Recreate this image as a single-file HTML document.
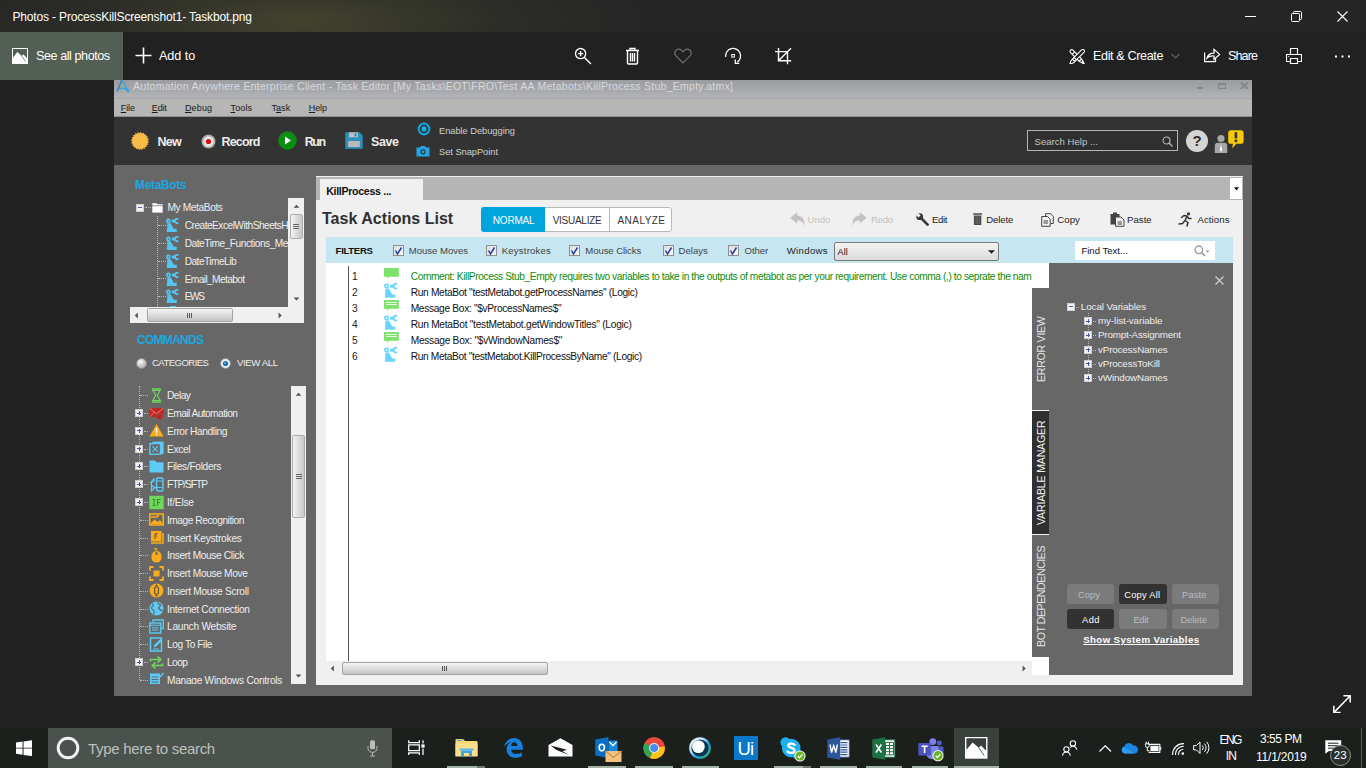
<!DOCTYPE html>
<html><head><meta charset="utf-8"><title>Photos</title>
<style>
*{box-sizing:border-box;margin:0;padding:0}
html,body{width:1366px;height:768px;overflow:hidden;background:#222;font-family:"Liberation Sans",sans-serif;}
.a{position:absolute}
.t{position:absolute;white-space:nowrap;line-height:20px}
#root{position:absolute;left:0;top:0;width:1366px;height:768px;overflow:hidden;background:#222}
#ptitle{left:0;top:0;width:1366px;height:32px;background:radial-gradient(ellipse 340px 80px at 300px 22px,#42432c 0%,#37382b 30%,#2c2c28 62%,#262626 100%)}
#ptool{left:0;top:32px;width:1366px;height:48px;background:#212121}
#seeall{left:0;top:32px;width:123px;height:48px;background:#535e54}
.pw{color:#fff}
#tb{left:0;top:728px;width:1366px;height:40px;background:#1c201d}
#tsearch{left:48px;top:728px;width:344px;height:40px;background:#4b514d}
#aa{left:114px;top:80px;width:1138px;height:616px;background:#676767}
#aatitle{left:114px;top:80px;width:1138px;height:18px;background:linear-gradient(#9c9da1,#a4a5a9 45%,#b4b5ba)}
#aamenu{left:114px;top:98px;width:1138px;height:19px;background:#b6b6b6;border-top:1px solid #a6a6a8;border-bottom:1px solid #8e8e8e}
#aabar{left:114px;top:117px;width:1138px;height:48px;background:#333}
.m{color:#1a1a1a}
.m u{text-decoration-thickness:1px;text-underline-offset:1px}
.bb{color:#ececec;font-weight:bold}
.tr{color:#eee}
.sm{color:#d0d0d0}
.dk{color:#222}
.ex{position:absolute;width:8px;height:8px;background:#f2f2f2;border:1px solid #cfcfcf}
.ex:before{content:"";position:absolute;left:1px;top:2.5px;width:4px;height:1px;background:#4556b4}
.ex.p:after{content:"";position:absolute;left:2.5px;top:1px;width:1px;height:4px;background:#4556b4}
.dh{position:absolute;height:0;border-top:1px dotted #b8b8b8}
.dv{position:absolute;width:0;border-left:1px dotted #b8b8b8}
.sb{position:absolute;background:#f0f0f0}
.thv{position:absolute;background:linear-gradient(90deg,#f4f4f4,#dcdcdc 50%,#c8c8c8);border:1px solid #acacac;border-radius:2px}
.thh{position:absolute;background:linear-gradient(#f4f4f4,#dcdcdc 50%,#c4c4c4);border:1px solid #a4a4a4;border-radius:2px}
.cb{position:absolute;width:11px;height:11px;background:linear-gradient(135deg,#dcdcdc,#fafafa);border:1px solid #8e8f8f}
.btn{position:absolute;height:20px;border-radius:2px;font-size:9.5px;text-align:center;line-height:20px}
.btn.d{background:#2e2e2e;color:#fff}
.btn.l{background:#7a7a7a;color:#b9b9b9}
.vt{position:absolute;transform-origin:0 0;transform:rotate(-90deg);white-space:nowrap;font-size:10.5px;line-height:1;letter-spacing:.2px}
</style></head><body>
<div id="root">
<!-- PHOTOS CHROME -->
<div class="a" id="ptitle"></div>
<div class="t pw" style="left:12.5px;top:7px;font-size:12px;letter-spacing:-0.165px;">Photos - ProcessKillScreenshot1- Taskbot.png</div>
<svg class="a" style="left:1245px;top:16px;" width="12" height="2" viewBox="0 0 12 2" ><rect x="0" y="0" width="11" height="1" fill="#fff"/></svg>
<svg class="a" style="left:1291px;top:11px;" width="12" height="12" viewBox="0 0 12 12" ><rect x="0.5" y="2.5" width="8" height="8" rx="1" fill="none" stroke="#fff" stroke-width="1"/><path d="M2.5 2.5V1.5a1 1 0 0 1 1-1h6a1 1 0 0 1 1 1v6a1 1 0 0 1-1 1H8.5" fill="none" stroke="#fff" stroke-width="1"/></svg>
<svg class="a" style="left:1337px;top:11px;" width="12" height="12" viewBox="0 0 12 12" ><path d="M0.5 0.5L10.5 10.5M10.5 0.5L0.5 10.5" stroke="#fff" stroke-width="1.1" fill="none"/></svg>
<div class="a" id="ptool"></div>
<div class="a" id="seeall"></div>
<svg class="a" style="left:12px;top:48px;" width="16" height="16" viewBox="0 0 16 16" ><rect x="0" y="0" width="16" height="16" fill="#fff"/><path d="M1 1H15V10.2L11.4 6.2L9.8 8L5.4 4.1L1 9.4Z" fill="#535e54"/><path d="M9.8 8L13.6 13.6" stroke="#535e54" stroke-width=".7"/></svg>
<div class="t pw" style="left:36px;top:46px;font-size:12.6px;letter-spacing:-0.435px;">See all photos</div>
<svg class="a" style="left:135px;top:47px;" width="17" height="17" viewBox="0 0 17 17" ><path d="M8.5 0.5V16.5M0.5 8.5H16.5" stroke="#fff" stroke-width="1.6" fill="none"/></svg>
<div class="t pw" style="left:159px;top:46px;font-size:12.6px;letter-spacing:-0.026px;">Add to</div>
<svg class="a" style="left:574px;top:47px;" width="18" height="18" viewBox="0 0 18 18" ><circle cx="6.6" cy="6.6" r="5.1" fill="none" stroke="#fff" stroke-width="1.3"/><path d="M10.4 10.4L17 17M4 6.6H9.2M6.6 4V9.2" stroke="#fff" stroke-width="1.4" fill="none"/></svg>
<svg class="a" style="left:625px;top:47px;" width="15" height="18" viewBox="0 0 15 18" ><path d="M1 3.5H14M5 3.5V1.5H10V3.5M2.5 3.5V16a1 1 0 0 0 1 1H11.5a1 1 0 0 0 1-1V3.5M5.5 6V14.5M7.5 6V14.5M9.5 6V14.5" stroke="#fff" stroke-width="1.4" fill="none"/></svg>
<svg class="a" style="left:674px;top:48px;" width="18" height="16" viewBox="0 0 18 16" ><path d="M9 15L1.8 7.6A3.9 3.9 0 0 1 7.4 2.2L9 3.8L10.6 2.2A3.9 3.9 0 0 1 16.2 7.6Z" stroke="#6e6e6e" stroke-width="1.2" fill="none"/></svg>
<svg class="a" style="left:724px;top:47.3px;" width="19" height="19" viewBox="0 0 19 19" ><path d="M1.66 9.8A7.5 7.5 0 1 1 13.3 15.1" stroke="#fff" stroke-width="1.3" fill="none"/><path d="M11.3 12.6V16.4H15.2" stroke="#fff" stroke-width="1.3" fill="none"/><rect x="7.8" y="7.5" width="2.6" height="2.6" fill="none" stroke="#fff" stroke-width="1"/></svg>
<svg class="a" style="left:775px;top:47.8px;" width="18" height="18" viewBox="0 0 18 18" ><path d="M3.5 0V12.7H16.2M0 3.6H12.5V16.2M16 0.3L3.7 12.5" stroke="#fff" stroke-width="1.4" fill="none"/></svg>
<svg class="a" style="left:1069px;top:48.6px;" width="16.2" height="15.6" viewBox="0 0 16.2 15.6" ><g transform="rotate(-45 8.1 7.8)" stroke="#fff" stroke-width="1.1" fill="#212121"><path d="M6.4 0.2A1.7 1.7 0 0 1 9.8 0.2V12.4L8.1 17.6L6.4 12.4Z"/><path d="M6.4 2.6H9.8M6.4 12.4H9.8" fill="none"/><path d="M7.3 15.2L8.1 17.6L8.9 15.2Z" fill="#fff"/></g><g transform="rotate(45 8.1 7.8)" stroke="#fff" stroke-width="1.1" fill="#212121"><path d="M6.4 -0.2A1.7 1.7 0 0 1 9.8 -0.2V10.4H6.4Z"/><path d="M6.4 10.4H9.8V12.8H6.4Z"/><path d="M6.4 12.8C6.2 15 7 16.4 8.1 18C9.2 16.4 10 15 9.8 12.8Z"/></g></svg>
<div class="t pw" style="left:1093px;top:46px;font-size:12.6px;letter-spacing:-0.37px;">Edit &amp; Create</div>
<svg class="a" style="left:1171px;top:53px;" width="9" height="6" viewBox="0 0 9 6" ><path d="M0.5 0.8L4.5 4.8L8.5 0.8" stroke="#5d6a5d" stroke-width="1.2" fill="none"/></svg>
<svg class="a" style="left:1204px;top:48px;" width="17" height="15" viewBox="0 0 17 15" ><path d="M0.6 4.5V13.5H11.5V10.8M3 10.2C3.6 7 6 5 10 5V1.4L15.6 6.4L10 11.4V8C7 7.8 4.6 8.4 3 10.2Z" stroke="#fff" stroke-width="1.25" fill="none"/></svg>
<div class="t pw" style="left:1228px;top:46px;font-size:12.6px;letter-spacing:-0.906px;">Share</div>
<svg class="a" style="left:1286px;top:48px;" width="16" height="16" viewBox="0 0 16 16" ><path d="M4.5 6.5V0.5H11.5V6.5M4.5 13.5H0.5V6.5H15.5V13.5H11.5M4.5 10.5H11.5V15.5H4.5Z" stroke="#fff" stroke-width="1.15" fill="none"/><rect x="2.2" y="8" width="1" height="1" fill="#fff"/></svg>
<svg class="a" style="left:1335px;top:55px;" width="15" height="3" viewBox="0 0 15 3" ><rect x="0" y="0.5" width="2" height="2" fill="#fff"/><rect x="6.5" y="0.5" width="2" height="2" fill="#fff"/><rect x="13" y="0.5" width="2" height="2" fill="#fff"/></svg>
<svg class="a" style="left:1333px;top:694.8px;" width="18" height="18.4" viewBox="0 0 18 18.4" ><path d="M1 17.4L17 1M10.4 0.8H17.2V7.6M0.8 10.8V17.6H7.6" stroke="#fff" stroke-width="1.5" fill="none"/></svg>
<!-- AA APP -->
<div class="a" id="aa"></div>
<div class="a" id="aatitle"></div>
<svg class="a" style="left:115.5px;top:80px;" width="14" height="13" viewBox="0 0 14 13" ><path d="M1 11.6L5.9 0" stroke="#3a7ea6" stroke-width="1.3" fill="none"/><path d="M6.3 0L11.7 10.6" stroke="#2aa9e6" stroke-width="1.5" fill="none"/><path d="M1.2 11.2C3.6 7.6 8 6.9 11.7 10.5" stroke="#2aa9e6" stroke-width="1.2" fill="none"/><circle cx="12" cy="10.8" r="1.35" fill="#2aa9e6"/></svg>
<div class="t " style="left:133px;top:76px;font-size:10.5px;letter-spacing:0.267px;color:#d8d8dc">Automation Anywhere Enterprise Client - Task Editor [My Tasks\EOT\FRO\Test AA Metabots\KillProcess Stub_Empty.atmx]</div>
<div class="a" style="left:1196.6px;top:86.8px;width:6.6px;height:2.3px;background:#84858a;"></div>
<div class="a" style="left:1218.1px;top:83px;width:7.9px;height:6.1px;border:1px solid #85868b;border-top-width:2px"></div>
<svg class="a" style="left:1239.8px;top:82px;" width="8.6" height="7.2" viewBox="0 0 8.6 7.2" ><path d="M0.8 0.2L7.8 7M7.8 0.2L0.8 7" stroke="#87888d" stroke-width="2"/></svg>
<div class="a" id="aamenu"></div>
<div class="t m" style="left:120.7px;top:98px;font-size:9px;letter-spacing:-0.035px;"><u>F</u>ile</div>
<div class="t m" style="left:151.8px;top:98px;font-size:9px;letter-spacing:-0.17px;"><u>E</u>dit</div>
<div class="t m" style="left:184.9px;top:98px;font-size:9px;letter-spacing:0.17px;"><u>D</u>ebug</div>
<div class="t m" style="left:230.6px;top:98px;font-size:9px;letter-spacing:0.097px;"><u>T</u>ools</div>
<div class="t m" style="left:271.4px;top:98px;font-size:9px;letter-spacing:0.098px;">T<u>a</u>sk</div>
<div class="t m" style="left:308.8px;top:98px;font-size:9px;letter-spacing:-0.103px;"><u>H</u>elp</div>
<div class="a" id="aabar"></div>
<svg class="a" style="left:131px;top:132px;" width="18" height="18" viewBox="0 0 18 18" ><circle cx="9" cy="9" r="8" fill="#f7b944" stroke="#f7b944" stroke-width="1.6" stroke-dasharray="1.3 1.2"/><circle cx="9" cy="9" r="7.2" fill="#f8bc48"/></svg>
<div class="t bb" style="left:157.5px;top:132px;font-size:12.5px;letter-spacing:-0.752px;">New</div>
<svg class="a" style="left:201px;top:134px;" width="15" height="15" viewBox="0 0 15 15" ><circle cx="7.5" cy="7.5" r="7" fill="#a8a8a8"/><circle cx="7.5" cy="7.5" r="5.2" fill="#e6e6e6"/><circle cx="7.5" cy="7.5" r="2.6" fill="#dd0a14"/></svg>
<div class="t bb" style="left:221.6px;top:132px;font-size:12.5px;letter-spacing:-0.873px;">Record</div>
<svg class="a" style="left:278px;top:131px;" width="19" height="19" viewBox="0 0 19 19" ><circle cx="9.5" cy="9.5" r="9.2" fill="#0a8f10"/><path d="M7 5.5L13 9.5L7 13.5Z" fill="#fff"/></svg>
<div class="t bb" style="left:304.7px;top:132px;font-size:12.5px;letter-spacing:-1.399px;">Run</div>
<svg class="a" style="left:345px;top:132.4px;" width="18" height="17" viewBox="0 0 18 17" ><path d="M0.3 0.3H14.6L17.7 3.4V16.7H0.3Z" fill="#2d8fba"/><rect x="4" y="0.3" width="9" height="5" fill="#bdbdbd"/><rect x="9.6" y="1.2" width="2" height="3.2" fill="#2d8fba"/><rect x="3.2" y="9" width="11.6" height="6" fill="#b9b9b9"/></svg>
<div class="t bb" style="left:371px;top:132px;font-size:12.5px;letter-spacing:-0.398px;">Save</div>
<svg class="a" style="left:416.5px;top:122px;" width="14" height="14" viewBox="0 0 14 14" ><circle cx="7" cy="7" r="5.4" fill="none" stroke="#16a6e0" stroke-width="2"/><circle cx="7" cy="7" r="2.7" fill="#16a6e0"/></svg>
<div class="t sm" style="left:439px;top:121px;font-size:9.3px;letter-spacing:-0.035px;">Enable Debugging</div>
<svg class="a" style="left:416px;top:145px;" width="14" height="12" viewBox="0 0 14 12" ><path d="M0.5 2.5H4L5 1H9L10 2.5H13.5V11.5H0.5Z" fill="#21a6e6"/><circle cx="7" cy="6.8" r="2.6" fill="#333"/><circle cx="7" cy="6.8" r="1.4" fill="#21a6e6"/></svg>
<div class="t sm" style="left:439px;top:142px;font-size:9.3px;letter-spacing:-0.038px;">Set SnapPoint</div>
<div class="a" style="left:1027px;top:130px;width:151px;height:21px;border:1px solid #b4b4b4;background:#2f2f2f"></div>
<div class="t " style="left:1034.5px;top:132px;font-size:9.6px;color:#c4c4c4">Search Help ...</div>
<svg class="a" style="left:1162.3px;top:136.2px;" width="11" height="11" viewBox="0 0 11 11" ><circle cx="4.5" cy="4.5" r="3.5" fill="none" stroke="#bdbdbd" stroke-width="1.1"/><path d="M7 7L10.5 10.5" stroke="#bdbdbd" stroke-width="1.3"/></svg>
<div class="a" style="left:1186px;top:129.8px;width:22px;height:22px;border-radius:50%;background:#d4d4d4"></div>
<div class="t " style="left:1192.6px;top:131px;font-size:15px;font-weight:bold;color:#2c2c2c">?</div>
<svg class="a" style="left:1214px;top:134px;" width="14" height="20" viewBox="0 0 14 20" ><circle cx="7" cy="4.5" r="3.6" fill="#a8a8a8"/><path d="M0.8 19V12a3.2 3.2 0 0 1 3.2-3.2H10a3.2 3.2 0 0 1 3.2 3.2V19Z" fill="#a8a8a8"/><path d="M7 10L8.2 16L7 18L5.8 16Z" fill="#fff"/></svg>
<svg class="a" style="left:1227.6px;top:129.6px;" width="16" height="19" viewBox="0 0 16 19" ><path d="M2.8 0.2H13a2.6 2.6 0 0 1 2.6 2.6V11.2a2.6 2.6 0 0 1-2.6 2.6H8.4L4 18.4L5 13.8H2.8a2.6 2.6 0 0 1-2.6-2.6V2.8A2.6 2.6 0 0 1 2.8 0.2Z" fill="#f6ca05"/><rect x="6.6" y="2.2" width="2.6" height="6.2" fill="#333"/><rect x="6.6" y="9.6" width="2.6" height="2.5" fill="#333"/></svg>
<!-- LEFT PANEL -->
<div class="t " style="left:135.1px;top:175px;font-size:11.9px;letter-spacing:-0.308px;font-weight:bold;color:#19a7e0">MetaBots</div>
<div class="ex" style="left:136px;top:203.5px"></div>
<div class="dh" style="left:145px;top:207px;width:6px"></div>
<svg class="a" style="left:151.5px;top:201.5px;" width="11" height="11" viewBox="0 0 11 11" ><path d="M0.3 1.2H4.6L5.4 2.2H10.7V3.4H0.3Z" fill="#fff"/><rect x="0.3" y="4.2" width="10.4" height="6.4" fill="#fff"/></svg>
<div class="t tr" style="left:167.5px;top:198px;font-size:10.2px;letter-spacing:-0.402px;">My MetaBots</div>
<div class="dv" style="left:157px;top:216px;height:91px"></div>
<div class="dh" style="left:158px;top:225.0px;width:8px"></div>
<svg class="a" style="left:166.3px;top:218.1px;" width="13.6" height="14" viewBox="0 0 14.3 14.7" ><circle cx="2.5" cy="3.1" r="1.65" fill="none" stroke="#52c5f2" stroke-width="1.7"/><rect x="6.1" y="1.6" width="4.4" height="3.1" fill="#52c5f2"/><path d="M13 1.2A2.3 2.3 0 1 0 13 5" fill="none" stroke="#52c5f2" stroke-width="1.9"/><path d="M1.3 5.4H4.8L8.3 11.4H11.3V14.7H0.9V11.4H1.3Z" fill="#52c5f2"/></svg>
<div class="t tr" style="left:184.7px;top:216px;font-size:10.2px;letter-spacing:-0.528px;width:103.3px;overflow:hidden">CreateExcelWithSheetsH</div>
<div class="dh" style="left:158px;top:242.8px;width:8px"></div>
<svg class="a" style="left:166.3px;top:235.9px;" width="13.6" height="14" viewBox="0 0 14.3 14.7" ><circle cx="2.5" cy="3.1" r="1.65" fill="none" stroke="#52c5f2" stroke-width="1.7"/><rect x="6.1" y="1.6" width="4.4" height="3.1" fill="#52c5f2"/><path d="M13 1.2A2.3 2.3 0 1 0 13 5" fill="none" stroke="#52c5f2" stroke-width="1.9"/><path d="M1.3 5.4H4.8L8.3 11.4H11.3V14.7H0.9V11.4H1.3Z" fill="#52c5f2"/></svg>
<div class="t tr" style="left:184.7px;top:234px;font-size:10.2px;letter-spacing:-0.479px;width:103.3px;overflow:hidden">DateTime_Functions_Me</div>
<div class="dh" style="left:158px;top:260.6px;width:8px"></div>
<svg class="a" style="left:166.3px;top:253.7px;" width="13.6" height="14" viewBox="0 0 14.3 14.7" ><circle cx="2.5" cy="3.1" r="1.65" fill="none" stroke="#52c5f2" stroke-width="1.7"/><rect x="6.1" y="1.6" width="4.4" height="3.1" fill="#52c5f2"/><path d="M13 1.2A2.3 2.3 0 1 0 13 5" fill="none" stroke="#52c5f2" stroke-width="1.9"/><path d="M1.3 5.4H4.8L8.3 11.4H11.3V14.7H0.9V11.4H1.3Z" fill="#52c5f2"/></svg>
<div class="t tr" style="left:184.7px;top:252px;font-size:10.2px;letter-spacing:-0.545px;width:103.3px;overflow:hidden">DateTimeLib</div>
<div class="dh" style="left:158px;top:278.4px;width:8px"></div>
<svg class="a" style="left:166.3px;top:271.5px;" width="13.6" height="14" viewBox="0 0 14.3 14.7" ><circle cx="2.5" cy="3.1" r="1.65" fill="none" stroke="#52c5f2" stroke-width="1.7"/><rect x="6.1" y="1.6" width="4.4" height="3.1" fill="#52c5f2"/><path d="M13 1.2A2.3 2.3 0 1 0 13 5" fill="none" stroke="#52c5f2" stroke-width="1.9"/><path d="M1.3 5.4H4.8L8.3 11.4H11.3V14.7H0.9V11.4H1.3Z" fill="#52c5f2"/></svg>
<div class="t tr" style="left:184.7px;top:270px;font-size:10.2px;letter-spacing:-0.628px;width:103.3px;overflow:hidden">Email_Metabot</div>
<div class="dh" style="left:158px;top:296.2px;width:8px"></div>
<svg class="a" style="left:166.3px;top:289.3px;" width="13.6" height="14" viewBox="0 0 14.3 14.7" ><circle cx="2.5" cy="3.1" r="1.65" fill="none" stroke="#52c5f2" stroke-width="1.7"/><rect x="6.1" y="1.6" width="4.4" height="3.1" fill="#52c5f2"/><path d="M13 1.2A2.3 2.3 0 1 0 13 5" fill="none" stroke="#52c5f2" stroke-width="1.9"/><path d="M1.3 5.4H4.8L8.3 11.4H11.3V14.7H0.9V11.4H1.3Z" fill="#52c5f2"/></svg>
<div class="t tr" style="left:184.7px;top:287px;font-size:10.2px;letter-spacing:-1.368px;width:103.3px;overflow:hidden">EWS</div>
<svg class="a" style="left:166.5px;top:306.2px;" width="14" height="1" viewBox="0 0 14 1" ><rect x="3" y="0" width="6" height="1" fill="#52c5f2"/></svg>
<div class="sb" style="left:288px;top:198px;width:16px;height:124.6px"></div>
<svg class="a" style="left:292.5px;top:204px;" width="7" height="4" viewBox="0 0 7 4" ><path d="M0.6 3.8L3.5 0.8L6.4 3.8Z" fill="#505050"/></svg>
<svg class="a" style="left:292.5px;top:297px;" width="7" height="4" viewBox="0 0 7 4" ><path d="M0.6 0.6L3.5 3.6L6.4 0.6Z" fill="#505050"/></svg>
<div class="thv" style="left:289.5px;top:214px;width:13.5px;height:25px"></div>
<div class="a" style="left:293px;top:224px;width:6px;height:1px;background:#666;"></div>
<div class="a" style="left:293px;top:226px;width:6px;height:1px;background:#666;"></div>
<div class="a" style="left:293px;top:228px;width:6px;height:1px;background:#666;"></div>
<div class="sb" style="left:130px;top:307.4px;width:158px;height:15.2px"></div>
<svg class="a" style="left:134.4px;top:311.5px;" width="4" height="7" viewBox="0 0 4 7" ><path d="M3.8 0.6L0.8 3.5L3.8 6.4Z" fill="#505050"/></svg>
<svg class="a" style="left:278.4px;top:311.5px;" width="4" height="7" viewBox="0 0 4 7" ><path d="M0.6 0.6L3.6 3.5L0.6 6.4Z" fill="#505050"/></svg>
<div class="thh" style="left:146.6px;top:308.4px;width:86.2px;height:13.2px"></div>
<div class="a" style="left:186.5px;top:312.5px;width:1px;height:5px;background:#555;"></div>
<div class="a" style="left:188.5px;top:312.5px;width:1px;height:5px;background:#555;"></div>
<div class="a" style="left:190.5px;top:312.5px;width:1px;height:5px;background:#555;"></div>
<div class="t " style="left:137px;top:330px;font-size:12px;letter-spacing:-0.713px;font-weight:bold;color:#19a7e0">COMMANDS</div>
<svg class="a" style="left:135.5px;top:357.8px;" width="11" height="11" viewBox="0 0 11 11" ><defs><radialGradient id="rg0" cx="40%" cy="35%"><stop offset="0" stop-color="#fff"/><stop offset="1" stop-color="#bdbdbd"/></radialGradient></defs><circle cx="5.5" cy="5.5" r="5" fill="url(#rg0)" stroke="#8a8a8a" stroke-width=".8"/></svg>
<div class="t tr" style="left:152px;top:353px;font-size:9.6px;letter-spacing:-0.581px;">CATEGORIES</div>
<svg class="a" style="left:219.5px;top:357.8px;" width="11" height="11" viewBox="0 0 11 11" ><circle cx="5.5" cy="5.5" r="5" fill="#e8eef2" stroke="#8a8a8a" stroke-width=".8"/><circle cx="5.5" cy="5.5" r="2.6" fill="#1b6fb0"/><circle cx="4.9" cy="4.9" r="1" fill="#5fb2e6"/></svg>
<div class="t tr" style="left:237px;top:353px;font-size:9.6px;letter-spacing:-0.393px;">VIEW ALL</div>
<div class="dv" style="left:139px;top:386px;height:294px"></div>
<div class="a" style="left:120px;top:386px;width:171px;height:297.6px;overflow:hidden">
<div class="dh" style="left:20px;top:9.3px;width:8px"></div>
<svg class="a" style="left:28.5px;top:1.8px;" width="15" height="15" viewBox="0 0 15 15" ><path d="M3 1H12M3 14H12" stroke="#6ed85a" stroke-width="1.6"/><path d="M4 2.5H11L8.3 7.5L11 12.5H4L6.7 7.5Z" fill="none" stroke="#6ed85a" stroke-width="1.2"/></svg>
<div class="t tr" style="left:47px;top:0px;font-size:10.2px;letter-spacing:-0.52px;">Delay</div>
<div class="ex p" style="left:15px;top:23.1px"></div>
<div class="dh" style="left:24px;top:27.1px;width:4px"></div>
<svg class="a" style="left:28.5px;top:19.6px;" width="15" height="15" viewBox="0 0 15 15" ><path d="M0.5 2.2H14.5V11H0.5Z" fill="#c6231f"/><path d="M0.5 2.2L7.5 7.6L14.5 2.2M0.5 11L5.4 6.2" stroke="#e89a94" stroke-width=".8" fill="none"/><circle cx="10.6" cy="10.6" r="3.4" fill="#c6231f" stroke="#676767" stroke-width=".7"/></svg>
<div class="t tr" style="left:47px;top:18px;font-size:10.2px;letter-spacing:-0.558px;">Email Automation</div>
<div class="ex p" style="left:15px;top:40.9px"></div>
<div class="dh" style="left:24px;top:44.9px;width:4px"></div>
<svg class="a" style="left:28.5px;top:37.4px;" width="15" height="15" viewBox="0 0 15 15" ><path d="M7.5 1L14.6 13.6H0.4Z" fill="#f9ab1b"/><rect x="6.8" y="5" width="1.5" height="4.8" fill="#fff"/><rect x="6.8" y="10.7" width="1.5" height="1.5" fill="#fff"/></svg>
<div class="t tr" style="left:47px;top:36px;font-size:10.2px;letter-spacing:-0.405px;">Error Handling</div>
<div class="ex p" style="left:15px;top:58.6px"></div>
<div class="dh" style="left:24px;top:62.6px;width:4px"></div>
<svg class="a" style="left:28.5px;top:55.1px;" width="15" height="15" viewBox="0 0 15 15" ><path d="M3.4 0.6H14.6V13H3.4Z" fill="#5ccbf5"/><rect x="0.9" y="2.6" width="10.6" height="10.6" fill="#676767" stroke="#5ccbf5" stroke-width="1.4"/><path d="M3.4 5.2L9 10.8M9 5.2L3.4 10.8" stroke="#5ccbf5" stroke-width="1.2"/></svg>
<div class="t tr" style="left:47px;top:54px;font-size:10.2px;letter-spacing:-0.361px;">Excel</div>
<div class="ex p" style="left:15px;top:76.4px"></div>
<div class="dh" style="left:24px;top:80.4px;width:4px"></div>
<svg class="a" style="left:28.5px;top:72.9px;" width="15" height="15" viewBox="0 0 15 15" ><path d="M0.5 1.5H6L7.2 3.2H14.5V13.5H0.5Z" fill="#5ccbf5"/></svg>
<div class="t tr" style="left:47px;top:71px;font-size:10.2px;letter-spacing:-0.324px;">Files/Folders</div>
<div class="ex p" style="left:15px;top:94.2px"></div>
<div class="dh" style="left:24px;top:98.2px;width:4px"></div>
<svg class="a" style="left:28.5px;top:90.7px;" width="15" height="15" viewBox="0 0 15 15" ><rect x="7.5" y="1" width="6.5" height="13" rx="1.5" fill="none" stroke="#5ccbf5" stroke-width="1.4"/><path d="M8 4H13.5M8 10.5H13.5" stroke="#5ccbf5" stroke-width="1.2"/><path d="M6 1.5C2.5 3 2 6 2.5 8.5M2.5 8.5V14L6 10.5Z" fill="none" stroke="#5ccbf5" stroke-width="1.3"/><path d="M1 6L6 3.5" stroke="#5ccbf5" stroke-width="1.2"/></svg>
<div class="t tr" style="left:47px;top:89px;font-size:10.2px;letter-spacing:-1.024px;">FTP/SFTP</div>
<div class="ex p" style="left:15px;top:112.0px"></div>
<div class="dh" style="left:24px;top:116.0px;width:4px"></div>
<svg class="a" style="left:28.5px;top:108.5px;" width="15" height="15" viewBox="0 0 15 15" ><rect x="0.3" y="0.8" width="14.4" height="13.4" fill="#6ed85a"/><path d="M3.5 4.5H6.5M5 4.5V10.5M3.5 10.5H6.5M8.5 10.8V4.5H11.8M8.5 7.5H11" stroke="#3c8a30" stroke-width="1.1" fill="none"/></svg>
<div class="t tr" style="left:47px;top:107px;font-size:10.2px;letter-spacing:-0.224px;">If/Else</div>
<div class="dh" style="left:20px;top:133.8px;width:8px"></div>
<svg class="a" style="left:28.5px;top:126.3px;" width="15" height="15" viewBox="0 0 15 15" ><rect x="0.8" y="2" width="13.4" height="11" fill="none" stroke="#f9ab1b" stroke-width="1.6"/><path d="M1 12L5.5 7.5L8.5 10L11 8L14 12Z" fill="#f9ab1b"/><path d="M2 5H7L10 3.5" stroke="#f9ab1b" stroke-width="1.4" fill="none"/></svg>
<div class="t tr" style="left:47px;top:125px;font-size:10.2px;letter-spacing:-0.472px;">Image Recognition</div>
<div class="dh" style="left:20px;top:151.5px;width:8px"></div>
<svg class="a" style="left:28.5px;top:144.0px;" width="15" height="15" viewBox="0 0 15 15" ><path d="M2 1H12.5V11.5H2Z" fill="#f9ab1b"/><path d="M2 13H14V3" stroke="#f9ab1b" stroke-width="1.6" fill="none"/><path d="M6 3.5V9M6 3.8H9M6 6H8.4" stroke="#6b5a3a" stroke-width="1.1" fill="none"/></svg>
<div class="t tr" style="left:47px;top:143px;font-size:10.2px;letter-spacing:-0.237px;">Insert Keystrokes</div>
<div class="dh" style="left:20px;top:169.3px;width:8px"></div>
<svg class="a" style="left:28.5px;top:161.8px;" width="15" height="15" viewBox="0 0 15 15" ><path d="M2.5 8A5 5 0 0 1 12.5 8V10A5 4.6 0 0 1 2.5 10Z" fill="#f9ab1b"/><path d="M7.5 4.5V1.5C7.5 0.5 6 0.3 5 1" stroke="#f9ab1b" stroke-width="1.3" fill="none"/><rect x="6.6" y="3.6" width="1.8" height="3.4" fill="#676767"/></svg>
<div class="t tr" style="left:47px;top:160px;font-size:10.2px;letter-spacing:-0.376px;">Insert Mouse Click</div>
<div class="dh" style="left:20px;top:187.1px;width:8px"></div>
<svg class="a" style="left:28.5px;top:179.6px;" width="15" height="15" viewBox="0 0 15 15" ><rect x="4.5" y="4.5" width="6" height="6" fill="#f9ab1b"/><path d="M1 4.5V1H4.5M10.5 1H14V4.5M14 10.5V14H10.5M4.5 14H1V10.5" stroke="#f9ab1b" stroke-width="1.8" fill="none"/></svg>
<div class="t tr" style="left:47px;top:178px;font-size:10.2px;letter-spacing:-0.358px;">Insert Mouse Move</div>
<div class="dh" style="left:20px;top:204.9px;width:8px"></div>
<svg class="a" style="left:28.5px;top:197.4px;" width="15" height="15" viewBox="0 0 15 15" ><circle cx="7.5" cy="7.5" r="7" fill="#f9ab1b"/><rect x="5.6" y="4" width="3.8" height="7" rx="1" fill="none" stroke="#5a5140" stroke-width="1.1"/><path d="M7.5 1.2L9 3H6ZM7.5 13.8L9 12H6Z" fill="#5a5140"/></svg>
<div class="t tr" style="left:47px;top:196px;font-size:10.2px;letter-spacing:-0.294px;">Insert Mouse Scroll</div>
<div class="dh" style="left:20px;top:222.7px;width:8px"></div>
<svg class="a" style="left:28.5px;top:215.2px;" width="15" height="15" viewBox="0 0 15 15" ><circle cx="7.5" cy="7.5" r="7" fill="#5ccbf5"/><path d="M3.5 2.5C5 4 4 5.5 2.5 6.5C2 8 4 8.5 5 10C5.5 12 4.5 13 4.5 13.5M9 1C8.5 2.5 10 3.5 11.5 3.5C12.5 5 10 5.5 9.5 7C10 9 12 8.5 13.5 10" stroke="#676767" stroke-width="1.2" fill="none"/></svg>
<div class="t tr" style="left:47px;top:214px;font-size:10.2px;letter-spacing:-0.335px;">Internet Connection</div>
<div class="dh" style="left:20px;top:240.4px;width:8px"></div>
<svg class="a" style="left:28.5px;top:232.9px;" width="15" height="15" viewBox="0 0 15 15" ><path d="M4 3V1H14.3V9.5H12.5" fill="none" stroke="#5ccbf5" stroke-width="1.3"/><rect x="0.8" y="4" width="11" height="10" fill="none" stroke="#5ccbf5" stroke-width="1.4"/><path d="M1 6.3H11.5M3 8.8H9.5M3 11H9.5" stroke="#5ccbf5" stroke-width="1.1"/></svg>
<div class="t tr" style="left:47px;top:231px;font-size:10.2px;letter-spacing:-0.266px;">Launch Website</div>
<div class="dh" style="left:20px;top:258.2px;width:8px"></div>
<svg class="a" style="left:28.5px;top:250.7px;" width="15" height="15" viewBox="0 0 15 15" ><rect x="1.5" y="1" width="11" height="13" fill="none" stroke="#5ccbf5" stroke-width="1.5"/><path d="M4.5 10.5L5.2 8L11.5 1.8L13.2 3.5L7 9.7Z" fill="#5ccbf5"/><path d="M4 12H10" stroke="#5ccbf5" stroke-width="1"/></svg>
<div class="t tr" style="left:47px;top:249px;font-size:10.2px;letter-spacing:-0.421px;">Log To File</div>
<div class="ex p" style="left:15px;top:272.0px"></div>
<div class="dh" style="left:24px;top:276.0px;width:4px"></div>
<svg class="a" style="left:28.5px;top:268.5px;" width="15" height="15" viewBox="0 0 15 15" ><path d="M1.5 6.5V4.5H11M8.5 1.5L11.8 4.5L8.5 7.5M13.5 8.5V10.5H4M6.5 7.5L3.2 10.5L6.5 13.5" stroke="#6ed85a" stroke-width="1.6" fill="none"/></svg>
<div class="t tr" style="left:47px;top:267px;font-size:10.2px;letter-spacing:-0.564px;">Loop</div>
<div class="dh" style="left:20px;top:293.8px;width:8px"></div>
<svg class="a" style="left:28.5px;top:286.3px;" width="15" height="15" viewBox="0 0 15 15" ><path d="M1 1.5H11V13.5H1Z" fill="#5ccbf5"/><path d="M2.5 5H9.5M2.5 7.5H9.5M2.5 10H9.5" stroke="#676767" stroke-width="1"/><path d="M10 3L11.5 4.5L14.5 0.8" stroke="#5ccbf5" stroke-width="1.4" fill="none"/></svg>
<div class="t tr" style="left:47px;top:285px;font-size:10.2px;letter-spacing:-0.29px;">Manage Windows Controls</div>
</div>
<div class="sb" style="left:291px;top:386.4px;width:15.2px;height:297.2px"></div>
<svg class="a" style="left:295px;top:392px;" width="7" height="4" viewBox="0 0 7 4" ><path d="M0.6 3.8L3.5 0.8L6.4 3.8Z" fill="#505050"/></svg>
<svg class="a" style="left:295px;top:673.8px;" width="7" height="4" viewBox="0 0 7 4" ><path d="M0.6 0.6L3.5 3.6L6.4 0.6Z" fill="#505050"/></svg>
<div class="thv" style="left:292px;top:435px;width:13px;height:83px"></div>
<div class="a" style="left:295.5px;top:474px;width:6px;height:1px;background:#666;"></div>
<div class="a" style="left:295.5px;top:476px;width:6px;height:1px;background:#666;"></div>
<div class="a" style="left:295.5px;top:478px;width:6px;height:1px;background:#666;"></div>
<!-- MAIN PANEL -->
<div class="a" style="left:316px;top:176px;width:927px;height:509px;background:#f0f0f0;"></div>
<div class="a" style="left:316px;top:176.6px;width:927px;height:23.3px;background:#b5b5b5;"></div>
<div class="a" style="left:320.1px;top:179.3px;width:102.7px;height:20.6px;background:#f0f0f0;"></div>
<div class="t " style="left:326.2px;top:181px;font-size:10.6px;letter-spacing:-0.294px;font-weight:bold;color:#111">KillProcess ...</div>
<div class="a" style="left:1229.8px;top:177.7px;width:12.4px;height:21.5px;background:#fff;"></div>
<svg class="a" style="left:1233.5px;top:187px;" width="5" height="4" viewBox="0 0 5 4" ><path d="M0 0.3H5L2.5 3.6Z" fill="#111"/></svg>
<div class="t " style="left:322px;top:209px;font-size:16px;letter-spacing:0.031px;font-weight:bold;color:#303030">Task Actions List</div>
<div class="a" style="left:480.5px;top:206.5px;width:191px;height:25px;border:1px solid #b9b9b9;border-radius:3px;background:#fff"></div>
<div class="a" style="left:480.5px;top:206.5px;width:64px;height:25px;border-radius:3px 0 0 3px;background:#00a5dc"></div>
<div class="a" style="left:609px;top:207px;width:1px;height:24px;background:#b9b9b9;"></div>
<div class="t " style="left:492.8px;top:211px;font-size:10px;letter-spacing:-0.197px;color:#fff">NORMAL</div>
<div class="t " style="left:552.7px;top:211px;font-size:10px;letter-spacing:-0.266px;color:#333">VISUALIZE</div>
<div class="t " style="left:617.5px;top:211px;font-size:10px;letter-spacing:0.445px;color:#333">ANALYZE</div>
<svg class="a" style="left:789.5px;top:212px;" width="15" height="14.5" viewBox="0 0 15 14.5" ><path d="M0.3 5.7L7.2 0.2V3.4C11.8 3.4 14.7 6.8 14.7 14C13.2 10 10.8 8.6 7.2 8.6V11.8Z" fill="#c2c2c2"/></svg>
<div class="t " style="left:807.6px;top:210px;font-size:9.6px;letter-spacing:-0.083px;color:#c2c2c2">Undo</div>
<svg class="a" style="left:852px;top:212px;" width="15" height="14.5" viewBox="0 0 15 14.5" ><path d="M14.7 5.7L7.8 0.2V3.4C3.2 3.4 0.3 6.8 0.3 14C1.8 10 4.2 8.6 7.8 8.6V11.8Z" fill="#c2c2c2"/></svg>
<div class="t " style="left:870.9px;top:210px;font-size:9.6px;letter-spacing:-0.217px;color:#c2c2c2">Redo</div>
<svg class="a" style="left:915.5px;top:212.5px;" width="13.5" height="13.5" viewBox="0 0 13.5 13.5" ><circle cx="3.7" cy="3.7" r="3.4" fill="#3a3a3a"/><path d="M-0.2 1.9L1.9 -0.2L4.6 2.5L2.5 4.6Z" fill="#f0f0f0"/><path d="M4.8 4.8L11.6 11.6" stroke="#3a3a3a" stroke-width="2.7" stroke-linecap="round"/></svg>
<div class="t " style="left:932px;top:210px;font-size:9.6px;letter-spacing:-0.381px;color:#222">Edit</div>
<svg class="a" style="left:973.4px;top:213px;" width="9.2" height="12.2" viewBox="0 0 9.2 12.2" ><path d="M0.2 0.2H9V1.8H0.2ZM0.9 2.6H8.3V12H0.9Z" fill="#4a4a4a"/><path d="M3 3.4V11.2M4.6 3.4V11.2M6.2 3.4V11.2" stroke="#777" stroke-width=".7"/></svg>
<div class="t " style="left:986.2px;top:210px;font-size:9.6px;letter-spacing:-0.13px;color:#222">Delete</div>
<svg class="a" style="left:1041px;top:212.5px;" width="13" height="14" viewBox="0 0 13 14" ><path d="M4.5 3V0.7H9.5L12.3 3.5V10.5H9.5" fill="none" stroke="#444" stroke-width="1"/><path d="M0.7 3.5H6.5L9.2 6.2V13.3H0.7Z" fill="#f0f0f0" stroke="#444" stroke-width="1"/><path d="M2.5 8H7M2.5 10H7" stroke="#444" stroke-width="1"/></svg>
<div class="t " style="left:1057.2px;top:210px;font-size:9.6px;letter-spacing:0.096px;color:#222">Copy</div>
<svg class="a" style="left:1109.5px;top:212px;" width="15" height="15" viewBox="0 0 15 15" ><path d="M0.5 2H9.5V12.5H0.5Z" fill="#444"/><rect x="3" y="0.5" width="4" height="2.5" fill="#444"/><path d="M5.5 5H11L14 8V14.3H5.5Z" fill="#f0f0f0" stroke="#444" stroke-width="1"/><path d="M7.5 10H12M7.5 12H12" stroke="#444" stroke-width="1"/></svg>
<div class="t " style="left:1127.1px;top:210px;font-size:9.6px;letter-spacing:0.013px;color:#222">Paste</div>
<svg class="a" style="left:1178px;top:212px;" width="14" height="15" viewBox="0 0 14 15" ><circle cx="10.5" cy="1.8" r="1.6" fill="#333"/><path d="M3.5 5.5L6 3.5L9 4L7 8.5L10 10.5L9 14M7 8.5L4.5 11.5L1 12M9 4L10.5 6.5L13 6.5" stroke="#333" stroke-width="1.5" fill="none" stroke-linecap="round" stroke-linejoin="round"/></svg>
<div class="t " style="left:1197.4px;top:210px;font-size:9.6px;letter-spacing:0.12px;color:#222">Actions</div>
<div class="a" style="left:325.5px;top:237.3px;width:907.8px;height:25.5px;background:#c6e7f1;"></div>
<div class="t " style="left:335.6px;top:241px;font-size:9.6px;letter-spacing:-0.314px;font-weight:bold;color:#111">FILTERS</div>
<div class="cb" style="left:392.7px;top:245.4px"></div>
<svg class="a" style="left:392.7px;top:245.9px;" width="11" height="10" viewBox="0 0 11 10" ><path d="M2.5 4.5L4.5 8L8.5 1.5" stroke="#2b3f9e" stroke-width="1.5" fill="none"/></svg>
<div class="t " style="left:408.8px;top:241px;font-size:9.6px;letter-spacing:-0.046px;color:#444">Mouse Moves</div>
<div class="cb" style="left:486.4px;top:245.4px"></div>
<svg class="a" style="left:486.4px;top:245.9px;" width="11" height="10" viewBox="0 0 11 10" ><path d="M2.5 4.5L4.5 8L8.5 1.5" stroke="#2b3f9e" stroke-width="1.5" fill="none"/></svg>
<div class="t " style="left:501.8px;top:241px;font-size:9.6px;letter-spacing:0.168px;color:#444">Keystrokes</div>
<div class="cb" style="left:569.2px;top:245.4px"></div>
<svg class="a" style="left:569.2px;top:245.9px;" width="11" height="10" viewBox="0 0 11 10" ><path d="M2.5 4.5L4.5 8L8.5 1.5" stroke="#2b3f9e" stroke-width="1.5" fill="none"/></svg>
<div class="t " style="left:585.3px;top:241px;font-size:9.6px;letter-spacing:-0.098px;color:#444">Mouse Clicks</div>
<div class="cb" style="left:662.8px;top:245.4px"></div>
<svg class="a" style="left:662.8px;top:245.9px;" width="11" height="10" viewBox="0 0 11 10" ><path d="M2.5 4.5L4.5 8L8.5 1.5" stroke="#2b3f9e" stroke-width="1.5" fill="none"/></svg>
<div class="t " style="left:678.6px;top:241px;font-size:9.6px;letter-spacing:-0.009px;color:#444">Delays</div>
<div class="cb" style="left:728px;top:245.4px"></div>
<svg class="a" style="left:728px;top:245.9px;" width="11" height="10" viewBox="0 0 11 10" ><path d="M2.5 4.5L4.5 8L8.5 1.5" stroke="#2b3f9e" stroke-width="1.5" fill="none"/></svg>
<div class="t " style="left:744.5px;top:241px;font-size:9.6px;letter-spacing:-0.053px;color:#444">Other</div>
<div class="t " style="left:786.7px;top:241px;font-size:9.6px;letter-spacing:0.343px;color:#222">Windows</div>
<div class="a" style="left:834.3px;top:242.1px;width:164.4px;height:18.7px;border:1px solid #7a7a7a;border-radius:2px;background:linear-gradient(#f4f4f4,#dadada)"></div>
<div class="t " style="left:837.6px;top:242px;font-size:9px;letter-spacing:0.099px;color:#111">All</div>
<svg class="a" style="left:988px;top:250px;" width="7" height="4" viewBox="0 0 7 4" ><path d="M0 0.2H7L3.5 3.8Z" fill="#222"/></svg>
<div class="a" style="left:1075px;top:241px;width:140.3px;height:19.2px;background:#fff;"></div>
<div class="t " style="left:1081.4px;top:241px;font-size:9.6px;letter-spacing:-0.025px;color:#111">Find Text...</div>
<svg class="a" style="left:1193.5px;top:245px;" width="16" height="12" viewBox="0 0 16 12" ><circle cx="4.8" cy="4.8" r="3.8" fill="none" stroke="#9a9a9a" stroke-width="1.3"/><path d="M7.6 7.6L11 11" stroke="#9a9a9a" stroke-width="1.6"/><path d="M11.5 5.5H15.5L13.5 7.8Z" fill="#9a9a9a"/></svg>
<div class="a" style="left:325.5px;top:262.8px;width:723.5px;height:398.2px;background:#fff;"></div>
<div class="a" style="left:348px;top:266px;width:1px;height:395px;background:#555;"></div>
<div class="t " style="left:352px;top:267px;font-size:10.2px;color:#222">1</div>
<svg class="a" style="left:384px;top:268.4px;" width="15" height="11" viewBox="0 0 15 11" ><path d="M0 0H14.8V8.7H5.4L3.2 10.6V8.7H0Z" fill="#7be26a"/></svg>
<div class="t " style="left:410.7px;top:267px;font-size:10.2px;letter-spacing:-0.406px;color:#0c8c0c">Comment: KillProcess Stub_Empty requires two variables to take in the outputs of metabot as per your requirement. Use comma (,) to seprate the nam</div>
<div class="t " style="left:352px;top:283px;font-size:10.2px;color:#222">2</div>
<svg class="a" style="left:383.9px;top:283.4px;" width="14.3" height="14.7" viewBox="0 0 14.3 14.7" ><circle cx="2.5" cy="3.1" r="1.65" fill="none" stroke="#6cd5fc" stroke-width="1.7"/><rect x="6.1" y="1.6" width="4.4" height="3.1" fill="#6cd5fc"/><path d="M13 1.2A2.3 2.3 0 1 0 13 5" fill="none" stroke="#6cd5fc" stroke-width="1.9"/><path d="M1.3 5.4H4.8L8.3 11.4H11.3V14.7H0.9V11.4H1.3Z" fill="#6cd5fc"/></svg>
<div class="t " style="left:410.7px;top:283px;font-size:10.2px;letter-spacing:-0.323px;color:#111">Run MetaBot "testMetabot.getProcessNames" (Logic)</div>
<div class="t " style="left:352px;top:299px;font-size:10.2px;color:#222">3</div>
<svg class="a" style="left:384px;top:300.4px;" width="15" height="11" viewBox="0 0 15 11" ><path d="M0 0H14.8V8.7H5.4L3.2 10.6V8.7H0Z" fill="#7be26a"/><path d="M2 2.4H12.8M2 4.6H12.8" stroke="#fff" stroke-width=".9"/></svg>
<div class="t " style="left:410.7px;top:299px;font-size:10.2px;letter-spacing:-0.317px;color:#111">Message Box: "$vProcessNames$"</div>
<div class="t " style="left:352px;top:315px;font-size:10.2px;color:#222">4</div>
<svg class="a" style="left:383.9px;top:315.3px;" width="14.3" height="14.7" viewBox="0 0 14.3 14.7" ><circle cx="2.5" cy="3.1" r="1.65" fill="none" stroke="#6cd5fc" stroke-width="1.7"/><rect x="6.1" y="1.6" width="4.4" height="3.1" fill="#6cd5fc"/><path d="M13 1.2A2.3 2.3 0 1 0 13 5" fill="none" stroke="#6cd5fc" stroke-width="1.9"/><path d="M1.3 5.4H4.8L8.3 11.4H11.3V14.7H0.9V11.4H1.3Z" fill="#6cd5fc"/></svg>
<div class="t " style="left:410.7px;top:315px;font-size:10.2px;letter-spacing:-0.267px;color:#111">Run MetaBot "testMetabot.getWindowTitles" (Logic)</div>
<div class="t " style="left:352px;top:331px;font-size:10.2px;color:#222">5</div>
<svg class="a" style="left:384px;top:332.3px;" width="15" height="11" viewBox="0 0 15 11" ><path d="M0 0H14.8V8.7H5.4L3.2 10.6V8.7H0Z" fill="#7be26a"/><path d="M2 2.4H12.8M2 4.6H12.8" stroke="#fff" stroke-width=".9"/></svg>
<div class="t " style="left:410.7px;top:331px;font-size:10.2px;letter-spacing:-0.28px;color:#111">Message Box: "$vWindowNames$"</div>
<div class="t " style="left:352px;top:347px;font-size:10.2px;color:#222">6</div>
<svg class="a" style="left:383.9px;top:347.3px;" width="14.3" height="14.7" viewBox="0 0 14.3 14.7" ><circle cx="2.5" cy="3.1" r="1.65" fill="none" stroke="#6cd5fc" stroke-width="1.7"/><rect x="6.1" y="1.6" width="4.4" height="3.1" fill="#6cd5fc"/><path d="M13 1.2A2.3 2.3 0 1 0 13 5" fill="none" stroke="#6cd5fc" stroke-width="1.9"/><path d="M1.3 5.4H4.8L8.3 11.4H11.3V14.7H0.9V11.4H1.3Z" fill="#6cd5fc"/></svg>
<div class="t " style="left:410.7px;top:347px;font-size:10.2px;letter-spacing:-0.352px;color:#111">Run MetaBot "testMetabot.KillProcessByName" (Logic)</div>
<div class="a" style="left:325.5px;top:661px;width:706.5px;height:14.5px;background:#f0f0f0;"></div>
<svg class="a" style="left:330px;top:665px;" width="4" height="7" viewBox="0 0 4 7" ><path d="M3.8 0.6L0.8 3.5L3.8 6.4Z" fill="#505050"/></svg>
<svg class="a" style="left:1022px;top:665px;" width="4" height="7" viewBox="0 0 4 7" ><path d="M0.6 0.6L3.6 3.5L0.6 6.4Z" fill="#505050"/></svg>
<div class="thh" style="left:342.4px;top:661.6px;width:205.4px;height:13px"></div>
<div class="a" style="left:441.5px;top:665.5px;width:1px;height:5px;background:#555;"></div>
<div class="a" style="left:443.5px;top:665.5px;width:1px;height:5px;background:#555;"></div>
<div class="a" style="left:445.5px;top:665.5px;width:1px;height:5px;background:#555;"></div>
<!-- RIGHT PANEL -->
<div class="a" style="left:1049px;top:262.8px;width:184.3px;height:412.5px;background:#676767;"></div>
<div class="a" style="left:1032px;top:288px;width:17px;height:369px;background:#676767;"></div>
<div class="a" style="left:1032px;top:409.6px;width:17px;height:125.6px;background:#303030;"></div>
<div class="a" style="left:1032px;top:409.6px;width:17px;height:1.3px;background:#f4f4f4;"></div>
<div class="a" style="left:1032px;top:534.2px;width:17px;height:1.3px;background:#f4f4f4;"></div>
<div class="a" style="left:1032px;top:656.8px;width:17px;height:18.6px;background:#fff;"></div>
<div class="t " style="left:1031px;top:381.8px;font-size:10.6px;transform-origin:0 0;transform:rotate(-90deg);letter-spacing:-0.268px;color:#e4e4e4">ERROR VIEW</div>
<div class="t " style="left:1031px;top:525.3px;font-size:10.6px;transform-origin:0 0;transform:rotate(-90deg);letter-spacing:-0.2px;color:#f4f4f4">VARIABLE MANAGER</div>
<div class="t " style="left:1031px;top:646.9px;font-size:10.6px;transform-origin:0 0;transform:rotate(-90deg);letter-spacing:-0.439px;color:#e4e4e4">BOT DEPENDENCIES</div>
<svg class="a" style="left:1214.5px;top:275.5px;" width="9" height="9" viewBox="0 0 9 9" ><path d="M0.5 0.5L8.5 8.5M8.5 0.5L0.5 8.5" stroke="#d2d2d2" stroke-width="1.1"/></svg>
<div class="ex" style="left:1067px;top:302.7px"></div>
<div class="dh" style="left:1076px;top:306.5px;width:3px"></div>
<div class="t tr" style="left:1080.8px;top:297px;font-size:9.8px;letter-spacing:-0.07px;">Local Variables</div>
<div class="dv" style="left:1088px;top:313px;height:65px"></div>
<div class="ex p" style="left:1084.2px;top:317.0px"></div>
<div class="dh" style="left:1093px;top:321.0px;width:3px"></div>
<div class="t tr" style="left:1098px;top:311px;font-size:9.8px;letter-spacing:-0.093px;">my-list-variable</div>
<div class="ex p" style="left:1084.2px;top:331.2px"></div>
<div class="dh" style="left:1093px;top:335.2px;width:3px"></div>
<div class="t tr" style="left:1098px;top:325px;font-size:9.8px;letter-spacing:-0.184px;">Prompt-Assignment</div>
<div class="ex p" style="left:1084.2px;top:345.5px"></div>
<div class="dh" style="left:1093px;top:349.5px;width:3px"></div>
<div class="t tr" style="left:1098px;top:340px;font-size:9.8px;letter-spacing:-0.145px;">vProcessNames</div>
<div class="ex p" style="left:1084.2px;top:359.8px"></div>
<div class="dh" style="left:1093px;top:363.8px;width:3px"></div>
<div class="t tr" style="left:1098px;top:354px;font-size:9.8px;letter-spacing:-0.14px;">vProcessToKill</div>
<div class="ex p" style="left:1084.2px;top:374.0px"></div>
<div class="dh" style="left:1093px;top:378.0px;width:3px"></div>
<div class="t tr" style="left:1098px;top:368px;font-size:9.8px;letter-spacing:-0.109px;">vWindowNames</div>
<div class="a" style="left:1067.2px;top:584.4px;width:46.8px;height:19.5px;border-radius:3px;background:#7b7b7b"></div>
<div class="a" style="left:1119.1px;top:584.4px;width:47.7px;height:19.5px;border-radius:3px;background:#323232"></div>
<div class="a" style="left:1171.9px;top:584.4px;width:47.2px;height:19.5px;border-radius:3px;background:#7b7b7b"></div>
<div class="a" style="left:1067.2px;top:609.4px;width:46.8px;height:19.5px;border-radius:3px;background:#323232"></div>
<div class="a" style="left:1119.1px;top:609.4px;width:47.7px;height:19.5px;border-radius:3px;background:#7b7b7b"></div>
<div class="a" style="left:1171.9px;top:609.4px;width:47.2px;height:19.5px;border-radius:3px;background:#7b7b7b"></div>
<div class="t " style="left:1078px;top:585px;font-size:9.3px;letter-spacing:0.096px;color:#bcbcbc">Copy</div>
<div class="t " style="left:1124.2px;top:585px;font-size:9.3px;letter-spacing:0.269px;color:#fff">Copy All</div>
<div class="t " style="left:1182px;top:585px;font-size:9.3px;letter-spacing:0.18px;color:#bcbcbc">Paste</div>
<div class="t " style="left:1082px;top:610px;font-size:9.3px;letter-spacing:0.476px;color:#fff">Add</div>
<div class="t " style="left:1133.5px;top:610px;font-size:9.3px;letter-spacing:-0.342px;color:#bcbcbc">Edit</div>
<div class="t " style="left:1180.5px;top:610px;font-size:9.3px;letter-spacing:-0.077px;color:#bcbcbc">Delete</div>
<div class="t " style="left:1083.2px;top:630px;font-size:9.7px;letter-spacing:0.382px;font-weight:bold;color:#fff;text-decoration:underline;text-underline-offset:1px">Show System Variables</div>
<!-- TASKBAR -->
<div class="a" id="tb"></div>
<div class="a" id="tsearch"></div>
<svg class="a" style="left:15.5px;top:740px;" width="16.4" height="16.3" viewBox="0 0 17 16.5" ><path d="M0 2.4L6.8 1.4V7.8H0ZM7.8 1.25L17 0V7.8H7.8ZM0 8.7H6.8V15.1L0 14.1ZM7.8 8.7H17V16.5L7.8 15.25Z" fill="#fff"/></svg>
<svg class="a" style="left:56px;top:736px;" width="24" height="24" viewBox="0 0 24 24" ><circle cx="12" cy="12" r="9.8" fill="none" stroke="#f4f4f4" stroke-width="2.9"/></svg>
<div class="t " style="left:88.1px;top:739px;font-size:15px;letter-spacing:-0.304px;color:#bcc0bc">Type here to search</div>
<svg class="a" style="left:366.5px;top:740px;" width="11" height="16.5" viewBox="0 0 11 16.5" ><rect x="3" y="0.3" width="5" height="9" rx="1.6" fill="#b9bcb9"/><path d="M1 6V8.2A4.5 4.2 0 0 0 10 8.2V6M5.5 12.5V16M3 16H8" stroke="#b9bcb9" stroke-width="1" fill="none"/></svg>
<svg class="a" style="left:407.6px;top:739.6px;" width="17" height="15.6" viewBox="0 0 17 15.6" ><path d="M0.7 0.2V2.6H11.3V0.2M0.7 15.4V13H11.3V15.4M0.7 4.9H11.3V10.7H0.7ZM15 0.2V3.4M15 8.6V15.4" stroke="#fff" stroke-width="1.25" fill="none"/><rect x="13.4" y="4.4" width="3.2" height="3.2" fill="#fff"/></svg>
<svg class="a" style="left:454.5px;top:738px;" width="23" height="19" viewBox="0 0 23 19" ><path d="M0.5 2A1 1 0 0 1 1.5 1H8L10 3H21.5A1 1 0 0 1 22.5 4V18H0.5Z" fill="#f8d775"/><path d="M0.5 5.5H22.5V18.5H0.5Z" fill="#fbe08c"/><path d="M2 1.8H7.5V2.8H2Z" fill="#3b9be0"/><path d="M6 18.5V12.5H17V18.5H14V15H9V18.5Z" fill="#3ea5ea"/><path d="M4.5 10.5H18.5V12.5H4.5Z" fill="#58b8f2"/></svg>
<div class="a" style="left:447px;top:766px;width:29.5px;height:2px;background:#a3b2a5;"></div>
<div class="a" style="left:476.5px;top:766px;width:8.0px;height:2px;background:#6d786f;"></div>
<svg class="a" style="left:502.7px;top:737px;" width="20.8" height="21.6" viewBox="0 0 24 24.4" ><path fill-rule="evenodd" d="M1.2 11.4C2 5.6 6.5 1 12.6 1C18.8 1 22.8 5.6 22.8 11.8V14.4H9.2C9.4 17.4 11.8 19.3 15.2 19.3C17.7 19.3 20 18.5 21.7 17.4V22C19.7 23.1 17.2 23.7 14.4 23.7C8.3 23.7 4.1 19.6 4.1 13.9C4.1 10.2 6.1 7.2 9.2 5.4C5.6 6.2 2.5 8.6 1.2 11.4ZM9.3 10.2H16.6C16.6 7.5 15.1 5.9 12.9 5.9C10.9 5.9 9.6 7.6 9.3 10.2Z" fill="#1481de"/></svg>
<svg class="a" style="left:547.5px;top:738px;" width="25" height="19" viewBox="0 0 25 19" ><path d="M0.5 7L12.5 0.3L24.5 7V18.5H0.5Z" fill="#fff"/><path d="M2.5 7.5L19 11.8L14.5 13.2L21 17L8.5 12Z" fill="#1d211e"/></svg>
<svg class="a" style="left:595px;top:737px;" width="27" height="26" viewBox="0 0 27 26" ><path d="M0.3 2.5L13.5 0V21L0.3 18.5Z" fill="#0a6fc6"/><path d="M13.5 3.5H22.5V16H13.5Z" fill="#1587e0"/><path d="M14.5 5L18 8.5L21.5 5" stroke="#fff" stroke-width="1.3" fill="none"/><ellipse cx="6.8" cy="10.6" rx="2.6" ry="3.3" fill="none" stroke="#fff" stroke-width="1.6"/><path d="M10.5 14H26.5V25H10.5Z" fill="#f2c17f"/><path d="M10.5 14L18.5 20.5L26.5 14" stroke="#c98e45" stroke-width="1.1" fill="none"/></svg>
<div class="a" style="left:588.2px;top:766px;width:37.5px;height:2px;background:#a3b2a5;"></div>
<svg class="a" style="left:642.7px;top:737px;" width="22.2" height="22.2" viewBox="0 0 24 24" ><circle cx="12" cy="12" r="11.6" fill="#e9483b"/><path d="M12 12L2 6.2A11.6 11.6 0 0 0 7.5 22.7Z" fill="#30a652"/><path d="M12 12L7.5 22.7A11.6 11.6 0 0 0 23.4 10L12 9Z" fill="#fbc21b"/><path d="M12 12L23.4 10A11.6 11.6 0 0 0 2 6.2Z" fill="#e9483b"/><circle cx="12" cy="12" r="5.4" fill="#f4f4f4"/><circle cx="12" cy="12" r="4.3" fill="#4c8bf0"/></svg>
<div class="a" style="left:635px;top:766px;width:37.5px;height:2px;background:#a3b2a5;"></div>
<svg class="a" style="left:689px;top:736.5px;" width="22" height="22" viewBox="0 0 22 22" ><defs><linearGradient id="wx" x1="0" y1="0" x2="1" y2="1"><stop offset="0" stop-color="#ffffff"/><stop offset=".35" stop-color="#bfe6ff"/><stop offset=".6" stop-color="#1f9fe6"/><stop offset="1" stop-color="#3fb84a"/></linearGradient></defs><circle cx="11" cy="11" r="10.8" fill="url(#wx)"/><circle cx="11" cy="11" r="8.6" fill="#0c3349"/><circle cx="9.4" cy="9.6" r="6.4" fill="#f8fcff"/></svg>
<div class="a" style="left:681.9px;top:766px;width:36.8px;height:2px;background:#a3b2a5;"></div>
<div class="a" style="left:733.6px;top:735.6px;width:24.2px;height:24.2px;background:#0b78c9;"></div>
<div class="t " style="left:737.5px;top:739px;font-size:18.5px;letter-spacing:-0.971px;color:#fff">Ui</div>
<svg class="a" style="left:780px;top:736.5px;" width="26" height="25" viewBox="0 0 26 25" ><circle cx="11.2" cy="11" r="9.3" fill="#1fb0f2"/><circle cx="5.6" cy="5.4" r="5.2" fill="#1fb0f2"/><circle cx="16.8" cy="16.6" r="5.2" fill="#1fb0f2"/><path d="M14.6 7.9C13.6 6.3 9.2 5.8 8.3 8C7.4 10.7 14.3 10.3 14.6 13.4C14.8 16.6 9.2 16.6 7.4 14.4" stroke="#fff" stroke-width="2.3" fill="none" stroke-linecap="round"/><circle cx="20" cy="19" r="5.6" fill="#f4f4f4"/><circle cx="20" cy="19" r="4.6" fill="#69b424"/><path d="M17.7 19L19.4 20.8L22.4 17.4" stroke="#fff" stroke-width="1.3" fill="none"/></svg>
<div class="a" style="left:773.7px;top:766px;width:29.0px;height:2px;background:#a3b2a5;"></div>
<div class="a" style="left:802.7px;top:766px;width:8.5px;height:2px;background:#6d786f;"></div>
<svg class="a" style="left:826.5px;top:736.5px;" width="23" height="23" viewBox="0 0 23 23" ><path d="M11 2.8H22.3V20.2H11Z" fill="#fff" stroke="#2b579a" stroke-width=".9"/><path d="M13.5 5.6H20.5M13.5 8H20.5M13.5 10.4H20.5M13.5 12.8H20.5M13.5 15.2H20.5M13.5 17.6H20.5" stroke="#2b579a" stroke-width="1.2"/><path d="M0.3 2.6L13.3 0.2V22.8L0.3 20.4Z" fill="#2b579a"/><path d="M3 7.5L4.6 15.5L6.7 8.6L8.8 15.5L10.4 7.5" stroke="#fff" stroke-width="1.4" fill="none"/></svg>
<div class="a" style="left:820.1px;top:766px;width:36.8px;height:2px;background:#a3b2a5;"></div>
<svg class="a" style="left:872px;top:736.5px;" width="23.5" height="23" viewBox="0 0 23.5 23" ><path d="M11 2.8H22.8V20.2H11Z" fill="#fff" stroke="#1e7145" stroke-width=".9"/><path d="M13.5 5.4H21.5V17.8H13.5ZM13.5 8.5H21.5M13.5 11.6H21.5M13.5 14.7H21.5M17.5 5.4V17.8" stroke="#1e7145" stroke-width="1" fill="none"/><path d="M0.3 2.6L13.3 0.2V22.8L0.3 20.4Z" fill="#1e7145"/><path d="M4 7.5L9.4 15.5M9.4 7.5L4 15.5" stroke="#fff" stroke-width="1.6" fill="none"/></svg>
<div class="a" style="left:865.6px;top:766px;width:36.7px;height:2px;background:#a3b2a5;"></div>
<svg class="a" style="left:918px;top:737px;" width="26" height="25" viewBox="0 0 26 25" ><circle cx="14.8" cy="4.6" r="3.4" fill="#7b83eb"/><circle cx="21.3" cy="6" r="2.5" fill="#5059c9"/><path d="M17.5 9.5H24.5A1 1 0 0 1 25.5 10.5V15.5A4 4 0 0 1 17.5 16.5Z" fill="#5059c9"/><path d="M8 9H19.5A1 1 0 0 1 20.5 10V16A6.2 6.2 0 0 1 8 16Z" fill="#7b83eb"/><rect x="0.3" y="6" width="12.6" height="12.6" rx="1.2" fill="#4b53bc"/><path d="M3.6 9.2H9.6M6.6 9.2V16" stroke="#fff" stroke-width="1.6" fill="none"/><circle cx="20" cy="18.7" r="5.6" fill="#f4f4f4"/><circle cx="20" cy="18.7" r="4.6" fill="#69b424"/><path d="M17.7 18.7L19.4 20.5L22.4 17.1" stroke="#fff" stroke-width="1.3" fill="none"/></svg>
<div class="a" style="left:912px;top:766px;width:36.2px;height:2px;background:#a3b2a5;"></div>
<div class="a" style="left:954.2px;top:728px;width:45.2px;height:40px;background:#3a413c;"></div>
<svg class="a" style="left:965px;top:737.3px;" width="22.5" height="21.7" viewBox="0 0 16 16" preserveAspectRatio="none"><rect x="0" y="0" width="16" height="16" fill="#fff"/><path d="M1 1H15V10.2L11.4 6.2L9.8 8L5.4 4.1L1 9.4Z" fill="#3a413c"/><path d="M9.8 8L13.6 13.6" stroke="#3a413c" stroke-width=".6"/></svg>
<div class="a" style="left:954.2px;top:766px;width:45.2px;height:2px;background:#a3b2a5;"></div>
<svg class="a" style="left:1061.5px;top:739.5px;" width="16" height="16" viewBox="0 0 16 16" ><circle cx="10.9" cy="3.4" r="2.7" fill="none" stroke="#fff" stroke-width="1.1"/><circle cx="4.4" cy="9.3" r="2.6" fill="none" stroke="#fff" stroke-width="1.1"/><path d="M0.5 15.6C1 13 2.6 12 4.4 12S7.8 13 8.3 15.6M8 7.6C9 6.4 10 6.2 10.9 6.2C12.8 6.2 14.3 7.4 14.8 9.6" stroke="#fff" stroke-width="1.1" fill="none"/></svg>
<svg class="a" style="left:1099px;top:745px;" width="12.5" height="7" viewBox="0 0 12.5 7" ><path d="M0.5 6.5L6.25 0.8L12 6.5" stroke="#fff" stroke-width="1.2" fill="none"/></svg>
<svg class="a" style="left:1120.5px;top:742.5px;" width="17" height="11" viewBox="0 0 17 11" ><path d="M4 10.6A3.6 3.6 0 0 1 3.2 3.6A5 5 0 0 1 12.3 2.6A4 4 0 0 1 13.4 10.6Z" fill="#1b86e2"/><path d="M4 10.6A3.6 3.6 0 0 1 2.4 4.1L13.4 10.6Z" fill="#2f9cf0"/></svg>
<svg class="a" style="left:1145px;top:741px;" width="16.5" height="12.5" viewBox="0 0 16.5 12.5" ><path d="M3.6 3.4H14.8V11.4H3.6" fill="none" stroke="#fff" stroke-width="1.1"/><rect x="15.2" y="5.6" width="1" height="3.6" fill="#fff"/><rect x="5.4" y="4.8" width="8.2" height="5.2" fill="#fff"/><path d="M1.2 0.6V2.6M3.4 0.6V2.6M0.4 2.8H4.2V4.6A1.9 1.9 0 0 1 0.4 4.6ZM2.3 6.6V9.8H4.4" stroke="#fff" stroke-width="1" fill="none"/></svg>
<svg class="a" style="left:1172px;top:742.5px;" width="13.5" height="12.5" viewBox="0 0 13.5 12.5" ><circle cx="10.8" cy="10.6" r="1.3" fill="#fff"/><path d="M6.8 12A4.3 4.3 0 0 1 11.2 6.5" stroke="#fff" stroke-width="1.1" fill="none"/><path d="M3.6 12A7.6 7.6 0 0 1 11.6 3.4" stroke="#fff" stroke-width="1.1" fill="none"/><path d="M0.6 12A10.8 10.8 0 0 1 12 0.6" stroke="#fff" stroke-width="1.1" fill="none"/></svg>
<svg class="a" style="left:1192.5px;top:741px;" width="17.5" height="13.5" viewBox="0 0 17.5 13.5" ><path d="M0.6 4.6H3.4L7 1V12.5L3.4 8.9H0.6Z" fill="none" stroke="#fff" stroke-width="1"/><path d="M9.3 4.5A3.2 3.2 0 0 1 9.3 9M11.4 2.6A6 6 0 0 1 11.4 10.9M13.6 0.8A8.8 8.8 0 0 1 13.6 12.7" stroke="#fff" stroke-width="1" fill="none"/></svg>
<div class="t " style="left:1219.5px;top:730px;font-size:12px;letter-spacing:-1.552px;color:#fff">ENG</div>
<div class="t " style="left:1225.7px;top:746px;font-size:12px;letter-spacing:-0.8px;color:#fff">IN</div>
<div class="t " style="left:1260px;top:729px;font-size:12px;letter-spacing:-0.448px;color:#fff">3:55 PM</div>
<div class="t " style="left:1256px;top:747px;font-size:12px;letter-spacing:-0.212px;color:#fff">11/1/2019</div>
<svg class="a" style="left:1325px;top:740px;" width="16.5" height="14" viewBox="0 0 16.5 14" ><path d="M0.3 0.3H16.2V11H4L0.3 13.8Z" fill="#fff"/><path d="M3 3.2H13.5M3 5.7H13.5M3 8.2H13.5" stroke="#1d1f1d" stroke-width="1"/></svg>
<div class="a" style="left:1329.7px;top:744.5px;width:21px;height:21px;border-radius:50%;background:#2c302d;border:1px solid #8e928f"></div>
<div class="t " style="left:1333.8px;top:745px;font-size:11.5px;letter-spacing:0.008px;color:#fff">23</div>
<div class="a" style="left:1361px;top:728px;width:1px;height:40px;background:#5a5e5b;"></div>
</div>
</body></html>
